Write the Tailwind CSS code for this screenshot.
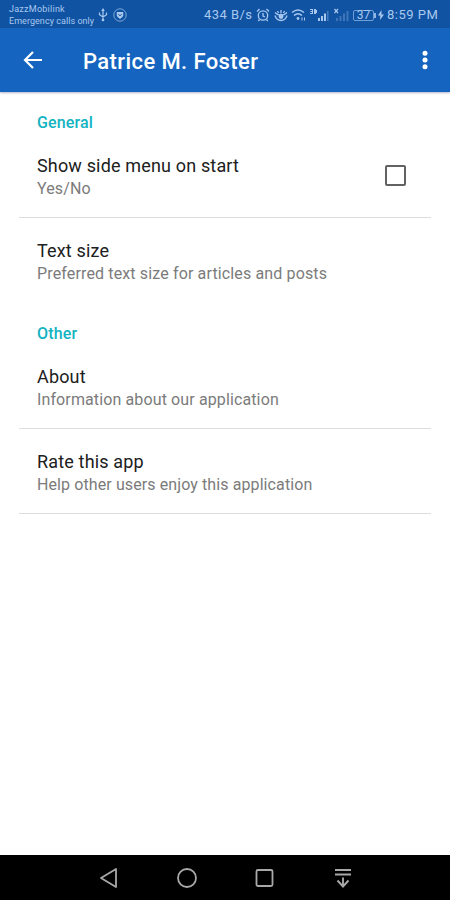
<!DOCTYPE html>
<html lang="en">
<head>
<meta charset="utf-8">
<title>Settings</title>
<script src="https://cdn.jsdelivr.net/npm/@tailwindcss/browser@4"></script>
</head>
<body class="bg-white">
<div class="w-[450px] h-[900px] flex flex-col overflow-hidden font-['Roboto',sans-serif] bg-white">
  <div class="h-7 shrink-0 bg-[#1053a3] flex items-center text-[#a9c8ee] pl-[9px] pr-[11px]">
    <div class="w-[87px] text-[9px] leading-[12px] whitespace-nowrap pt-[2px]">
      <div class="tracking-[0.25px]">JazzMobilink</div>
      <div class="tracking-[0.05px]">Emergency calls only</div>
    </div>
    <svg class="ml-[2px] mt-[1px]" width="10" height="14" viewBox="0 0 10 14" fill="none" stroke="currentColor" stroke-width="1.2"><path d="M5 2v10M1.500 4.500v2.200L5 9l3.500-2.300V4.500"/><path d="M5 0L3.200 3h3.600z" fill="currentColor" stroke="none"/><circle cx="5" cy="12" r="1.300" fill="currentColor" stroke="none"/></svg>
    <svg class="ml-[5px] mt-[1px]" width="14" height="14" viewBox="0 0 14 14"><circle cx="7" cy="7" r="6.200" fill="none" stroke="currentColor" stroke-opacity=".7"/><path d="M3.800 4h6.400v3.300Q10 9.500 7 11 4 9.500 3.800 7.300z" fill="currentColor"/><path d="M5.300 6.200L7 7.800l1.700-1.600" fill="none" stroke="#1053a3"/></svg>
    <div class="ml-auto flex items-center pt-[2px]">
      <span class="text-[13px] leading-4 whitespace-nowrap w-[49px] tracking-[0.45px]">434 B/s</span>
      <svg class="ml-[3px]" width="14" height="14" viewBox="0 0 14 14" fill="none" stroke="currentColor" stroke-width="1.300"><circle cx="7" cy="7.500" r="4.700"/><path d="M1 3.500L3.500 1M13 3.500L10.500 1M7 5v3l2 1M3.500 11.500L2.300 13M10.500 11.500l1.200 1.500"/></svg>
      <svg class="ml-[4px]" width="14" height="14" viewBox="0 0 14 14" fill="none" stroke="currentColor" stroke-width="1.300"><path d="M1 4.500q6 6 12 0M1 7.500q1.500 5 6 5t6-5M3.500 3l1 2M10.500 3l-1 2M7 2v3.500"/><circle cx="7" cy="8.500" r="2.400" fill="currentColor" stroke="none"/></svg>
      <svg class="ml-[3px]" width="15" height="14" viewBox="0 0 15 14" fill="none" stroke="currentColor" stroke-width="1.500"><path d="M1 4.500q6-5 12 0M3 7.500q4-3.500 8 0"/><circle cx="7" cy="10.500" r="1.400" fill="currentColor" stroke="none"/><path d="M11 9.500v3M13.500 9.500v3" stroke-width="1"/></svg>
      <svg class="ml-[4px]" width="19" height="14" viewBox="0 0 19 14" fill="currentColor"><path d="M0 1h3v5H0V5h2V4H.500V3H2V2H0zM4 1h2v1h1v3H6v1H4zM8 10h2v3H8zM11 8h2v5h-2zM14 5.500h2V13h-2z"/><path d="M17 3h1.500v10H17z" opacity=".35"/></svg>
      <svg class="ml-[5px]" width="15" height="14" viewBox="0 0 15 14"><path d="M.500 1l3.500 4M4 1L.500 5" stroke="currentColor" stroke-width="1.200"/><path d="M2 10h2v3H2zM5.500 8h2v5h-2zM9 5.500h2V13H9zM12.500 3h2v10h-2z" fill="currentColor" opacity=".3"/></svg>
      <div class="ml-[4px] w-[21px] h-[11px] border border-[#6f9fd5] rounded-[2px] text-[12px] leading-[9px] text-center">37</div>
      <div class="w-[2px] h-[5px] bg-[#8eb7e5]"></div>
      <svg class="ml-[2px]" width="6" height="10" viewBox="0 0 6 10" fill="currentColor"><path d="M3.500 0L0 5.500h2.300L2 10l4-5.500H3.500z"/></svg>
      <span class="ml-[3px] text-[13px] leading-4 whitespace-nowrap w-[52px] tracking-[0.5px]">8:59 PM</span>
    </div>
  </div>
  <header class="relative z-10 h-16 shrink-0 bg-[#1565c0] flex items-center text-white shadow-[0_1px_2px_rgba(40,40,110,0.35)] pl-[23px] pr-[21px]">
    <svg width="20" height="20" viewBox="0 0 20 20" fill="none" stroke="currentColor" stroke-width="2.200"><path d="M19 10H2M10 2L2 10l8 8"/></svg>
    <h1 class="ml-[40px] mt-[4px] text-[22px] leading-7 font-medium tracking-[0.4px] whitespace-nowrap">Patrice M. Foster</h1>
    <svg class="ml-auto" width="8" height="20" viewBox="0 0 8 20" fill="currentColor"><circle cx="4" cy="3.200" r="2.500"/><circle cx="4" cy="10" r="2.500"/><circle cx="4" cy="16.800" r="2.500"/></svg>
  </header>
  <main class="flex-1 px-[19px] whitespace-nowrap">
    <h2 class="pl-[18px] pt-[21px] pb-[21px] text-base leading-5 font-medium tracking-[0.15px] text-[#12b3c2]">General</h2>
    <div class="pl-[18px] pr-[25px] pb-[17px] flex items-center justify-between border-b border-[#dedede]">
      <div>
        <div class="text-[18px] leading-6 tracking-[0.16px] text-[#202020]">Show side menu on start</div>
        <div class="text-base leading-[22px] tracking-[0.14px] text-[#7b7b7b]">Yes/No</div>
      </div>
      <div class="size-[21px] -mt-[3px] border-2 border-[#626262] rounded-[2px]"></div>
    </div>
    <div class="pl-[18px] pt-[21px] pb-[18px]">
      <div class="text-[18px] leading-6 tracking-[0.16px] text-[#202020]">Text size</div>
      <div class="text-base leading-[22px] tracking-[0.14px] text-[#7b7b7b]">Preferred text size for articles and posts</div>
    </div>
    <h2 class="pl-[18px] py-[21px] text-base leading-5 font-medium tracking-[0.15px] text-[#12b3c2]">Other</h2>
    <div class="pl-[18px] pb-[17px] border-b border-[#dedede]">
      <div class="text-[18px] leading-6 tracking-[0.16px] text-[#202020]">About</div>
      <div class="text-base leading-[22px] tracking-[0.12px] text-[#7b7b7b]">Information about our application</div>
    </div>
    <div class="pl-[18px] pt-[21px] pb-[17px] border-b border-[#dedede]">
      <div class="text-[18px] leading-6 tracking-[0.16px] text-[#202020]">Rate this app</div>
      <div class="text-base leading-[22px] tracking-[0.1px] text-[#7b7b7b]">Help other users enjoy this application</div>
    </div>
  </main>
  <nav class="h-[45px] shrink-0 bg-black flex items-center justify-between pl-[98px] pr-[97px] text-[#a8a8a8]">
    <svg width="20" height="22" viewBox="0 0 20 22" fill="none" stroke="currentColor" stroke-width="1.800" stroke-linejoin="round"><path d="M18 2v18L3 11z"/></svg>
    <svg width="22" height="22" viewBox="0 0 22 22" fill="none" stroke="currentColor" stroke-width="1.800"><circle cx="11" cy="11" r="9"/></svg>
    <svg width="20" height="20" viewBox="0 0 20 20" fill="none" stroke="currentColor" stroke-width="1.800"><rect x="1.500" y="2" width="16" height="16" rx="1.500"/></svg>
    <svg width="20" height="20" viewBox="0 0 20 20" fill="none" stroke="currentColor" stroke-width="1.900"><path d="M2 2h16M2 6.500h16M10 9.500v9M4.500 12.500l5.500 6 5.500-6"/></svg>
  </nav>
</div>
</body>
</html>
